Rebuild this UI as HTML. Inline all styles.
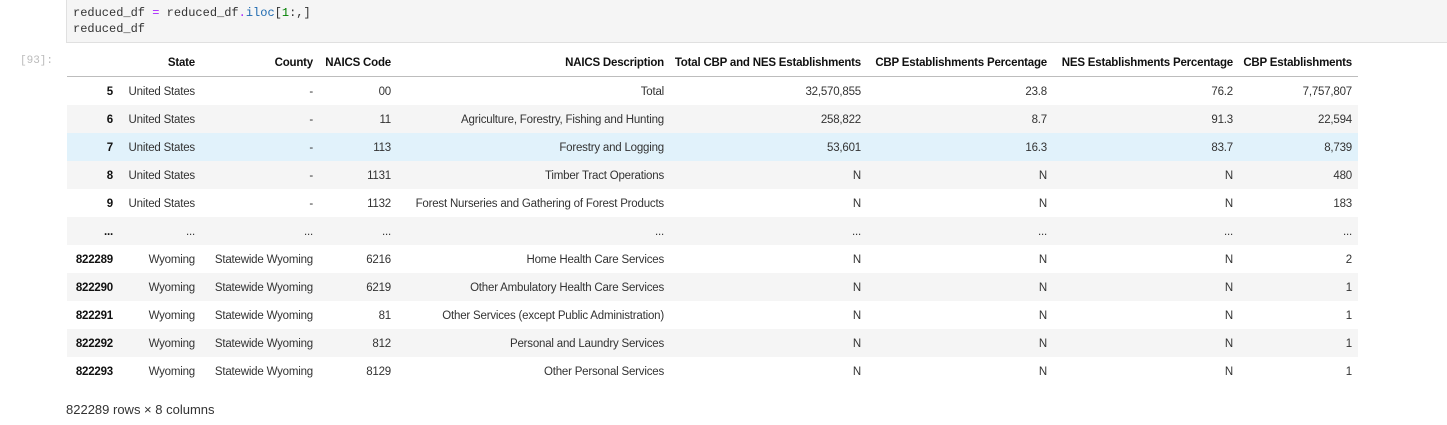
<!DOCTYPE html>
<html><head><meta charset="utf-8"><style>
body{margin:0;width:1447px;height:425px;background:#fff;position:relative;overflow:hidden;font-family:"Liberation Sans",sans-serif;color:#000}
.code{position:absolute;left:66px;top:0;width:1381px;height:42px;background:#f5f5f5;border-bottom:1px solid #e0e0e0;border-left:1px solid #e0e0e0}
.code pre{margin:0;position:absolute;left:6px;top:5px;font-family:"Liberation Mono",monospace;font-size:12px;line-height:16px;color:#333}
.p{color:#aa22ff}.f{color:#1e6ab0}.n{color:#008000}
.prompt{position:absolute;left:20px;top:55px;font-family:"Liberation Mono",monospace;font-size:11px;color:#bbb}
.row{position:absolute;left:67px;width:1291px;height:28px}
.c{position:absolute;top:1px;line-height:28px;font-size:11.5px;white-space:nowrap;text-align:right;color:#333;letter-spacing:-0.2px}
.h .c,.b{font-weight:bold;color:#111}
.foot{position:absolute;left:66px;top:402px;font-size:13px;color:#333}
</style></head><body>
<div class="code"><pre>reduced_df <span class="p">=</span> reduced_df<span class="p">.</span><span class="f">iloc</span>[<span class="n">1</span>:,]
reduced_df</pre></div>
<div class="prompt">[93]:</div>
<div id="t"></div>
<div class="foot">822289 rows × 8 columns</div>
<script>
var R=[113,195,313,391,664,861,1047,1233,1352];
var rows=[
["","State","County","NAICS Code","NAICS Description","Total CBP and NES Establishments","CBP Establishments Percentage","NES Establishments Percentage","CBP Establishments"],
["5","United States","-","00","Total","32,570,855","23.8","76.2","7,757,807"],
["6","United States","-","11","Agriculture, Forestry, Fishing and Hunting","258,822","8.7","91.3","22,594"],
["7","United States","-","113","Forestry and Logging","53,601","16.3","83.7","8,739"],
["8","United States","-","1131","Timber Tract Operations","N","N","N","480"],
["9","United States","-","1132","Forest Nurseries and Gathering of Forest Products","N","N","N","183"],
["...","...","...","...","...","...","...","...","..."],
["822289","Wyoming","Statewide Wyoming","6216","Home Health Care Services","N","N","N","2"],
["822290","Wyoming","Statewide Wyoming","6219","Other Ambulatory Health Care Services","N","N","N","1"],
["822291","Wyoming","Statewide Wyoming","81","Other Services (except Public Administration)","N","N","N","1"],
["822292","Wyoming","Statewide Wyoming","812","Personal and Laundry Services","N","N","N","1"],
["822293","Wyoming","Statewide Wyoming","8129","Other Personal Services","N","N","N","1"]];
var h="";
rows.forEach(function(r,i){
 var top=i==0?48:77+28*(i-1);
 var bg="transparent";
 if(i>0){var k=i-1; if(k==2)bg="#e1f2fb"; else if(k%2==1)bg="#f5f5f5";}
 var st="top:"+top+"px;background:"+bg+";"+(i==0?"border-bottom:1px solid #bdbdbd;":"");
 h+='<div class="row'+(i==0?' h':'')+'" style="'+st+'">';
 r.forEach(function(t,j){
  h+='<div class="c'+(j==0?' b':'')+'" style="right:'+(1358-R[j])+'px">'+t+'</div>';
 });
 h+='</div>';
});
document.getElementById("t").innerHTML=h;
</script>
</body></html>
